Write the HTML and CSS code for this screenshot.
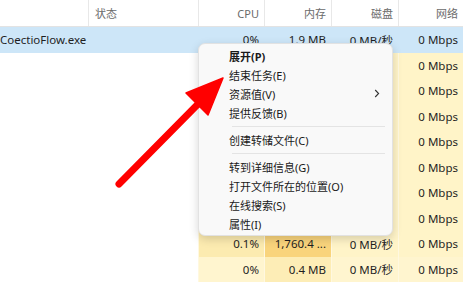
FILE: index.html
```html
<!DOCTYPE html>
<html>
<head>
<meta charset="utf-8">
<link rel="stylesheet" href="styles.css">
</head>
<body>
<div class="tm">
  <div class="row hdr">
    <div class="c name"></div>
    <div class="c status"><span class="pct"></span><span class="lbl">状态</span></div>
    <div class="c num"><span class="pct">4%</span><span class="lbl">CPU</span></div>
    <div class="c num"><span class="pct">58%</span><span class="lbl">内存</span></div>
    <div class="c num"><span class="pct">1%</span><span class="lbl">磁盘</span></div>
    <div class="c num"><span class="pct">0%</span><span class="lbl">网络</span></div>
  </div>
  <div class="row sel">
    <div class="c name">CoectioFlow.exe</div>
    <div class="c status"></div>
    <div class="c num">0%</div>
    <div class="c num">1.9 MB</div>
    <div class="c num">0 MB/秒</div>
    <div class="c num">0 Mbps</div>
  </div>
  <div class="row y"><div class="c name"></div><div class="c status"></div><div class="c num"></div><div class="c num"></div><div class="c num"></div><div class="c num">0 Mbps</div></div>
  <div class="row y"><div class="c name"></div><div class="c status"></div><div class="c num"></div><div class="c num"></div><div class="c num"></div><div class="c num">0 Mbps</div></div>
  <div class="row y"><div class="c name"></div><div class="c status"></div><div class="c num"></div><div class="c num"></div><div class="c num"></div><div class="c num">0 Mbps</div></div>
  <div class="row y"><div class="c name"></div><div class="c status"></div><div class="c num"></div><div class="c num"></div><div class="c num"></div><div class="c num">0 Mbps</div></div>
  <div class="row y"><div class="c name"></div><div class="c status"></div><div class="c num"></div><div class="c num"></div><div class="c num"></div><div class="c num">0 Mbps</div></div>
  <div class="row y"><div class="c name"></div><div class="c status"></div><div class="c num"></div><div class="c num"></div><div class="c num"></div><div class="c num">0 Mbps</div></div>
  <div class="row y"><div class="c name"></div><div class="c status"></div><div class="c num"></div><div class="c num"></div><div class="c num"></div><div class="c num">0 Mbps</div></div>
  <div class="row y r9"><div class="c name"></div><div class="c status"></div><div class="c num">0.1%</div><div class="c num hot">1,760.4 ...</div><div class="c num">0 MB/秒</div><div class="c num">0 Mbps</div></div>
  <div class="row y r10"><div class="c name"></div><div class="c status"></div><div class="c num">0%</div><div class="c num mem">0.4 MB</div><div class="c num">0 MB/秒</div><div class="c num">0 Mbps</div></div>
</div>

<div class="menu">
  <div class="mi bold">展开(P)</div>
  <div class="mi">结束任务(E)</div>
  <div class="mi sub">资源值(V)<span class="chev"><svg width="6" height="9" viewBox="0 0 6 9"><path d="M1.2 1 L4.6 4.5 L1.2 8" fill="none" stroke="#333" stroke-width="1.1"/></svg></span></div>
  <div class="mi">提供反馈(B)</div>
  <div class="sep"></div>
  <div class="mi">创建转储文件(C)</div>
  <div class="sep"></div>
  <div class="mi">转到详细信息(G)</div>
  <div class="mi">打开文件所在的位置(O)</div>
  <div class="mi">在线搜索(S)</div>
  <div class="mi">属性(I)</div>
</div>

<svg class="arrow" width="463" height="284" viewBox="0 0 463 284">
  <line x1="119" y1="184" x2="203" y2="99" stroke="#ff0000" stroke-width="7" stroke-linecap="round"/>
  <polygon points="223,78 186,93 208,115" fill="#ff0000" stroke="#ff0000" stroke-width="1.5" stroke-linejoin="round"/>
</svg>
</body>
</html>
```

FILE: styles.css
```css
html, body {
  margin: 0;
  padding: 0;
  width: 463px;
  height: 284px;
  overflow: hidden;
  background: #ffffff;
  font-family: "Noto Sans", "Noto Sans CJK SC", sans-serif;
  color: #1f1f1f;
}

.tm {
  display: flex;
  flex-direction: column;
  width: 463px;
}

.row {
  display: flex;
  height: 25.5px;
  font-size: 11.5px;
}

.c {
  box-sizing: border-box;
  display: flex;
  align-items: center;
  white-space: nowrap;
  overflow: hidden;
}

.c.name { width: 88px; }
.c.status { width: 110px; }
.c.num {
  width: 66px;
  justify-content: flex-end;
  padding-right: 5px;
}
.row .c.num:nth-child(4),
.row .c.num:nth-child(5) { width: 67px; }
.row .c.num:nth-child(6) { width: 65px; padding-right: 5px; }

.hdr {
  height: 27px;
  box-sizing: border-box;
  border-bottom: 1px solid #e3e3e3;
  color: #6b6b6b;
  font-size: 11px;
}
.hdr .c {
  flex-direction: column;
  align-items: flex-end;
  justify-content: flex-start;
  border-left: 1px solid #e8e8e8;
}
.hdr .c.name { border-left: none; }
.hdr .c.status { align-items: flex-start; padding-left: 6px; }
.hdr .pct {
  display: block;
  height: 14px;
  line-height: 14px;
  margin-top: -12px;
  font-size: 14px;
  color: #6b6b6b;
}
.hdr .lbl {
  display: block;
  height: 14px;
  line-height: 14px;
  margin-top: 5px;
}

.sel {
  background: #cde6f8;
}

.y .c.num {
  background: #fff4c8;
  border-left: 1px solid #fff8e0;
}
.r9 .c.num:nth-child(3) { background: #fcebb0; }
.r9 .c.num.hot { background: #f9d47c; }
.r10 .c.num { background: #fff5cf; }
.r10 .c.num.mem { background: #fdedb6; }

.menu {
  position: absolute;
  left: 198px;
  top: 43px;
  width: 195px;
  box-sizing: border-box;
  padding: 2px 0 2px 0;
  background: #f9f9f9;
  border: 1px solid #e2e2e2;
  border-radius: 7px;
  box-shadow: 0 3px 10px rgba(0, 0, 0, 0.16);
  font-size: 11px;
  color: #1a1a1a;
}

.mi {
  height: 19px;
  display: flex;
  align-items: center;
  padding-left: 30px;
  padding-right: 10px;
  white-space: nowrap;
}
.mi.bold { font-weight: bold; }
.mi.sub { justify-content: space-between; }
.chev { display: flex; align-items: center; margin-right: 2px; }

.sep {
  height: 1px;
  margin: 3.5px 7px 3.5px 33px;
  background: #e4e4e4;
}

.arrow {
  position: absolute;
  left: 0;
  top: 0;
  pointer-events: none;
}
```
